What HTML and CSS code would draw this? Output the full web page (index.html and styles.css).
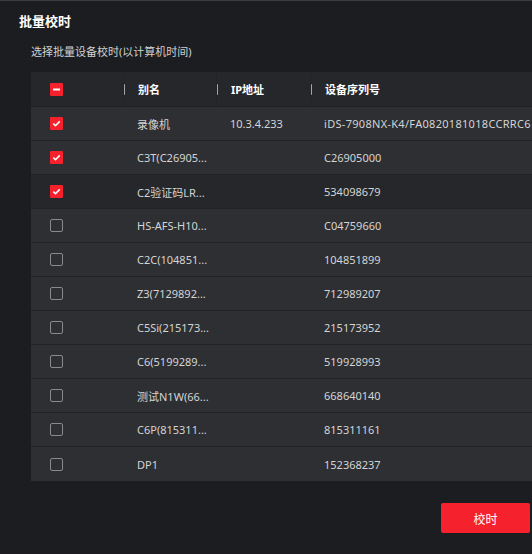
FILE: index.html
```html
<!DOCTYPE html>
<html lang="zh-CN">
<head>
<meta charset="utf-8">
<title>批量校时</title>
<link rel="stylesheet" href="styles.css">
</head>
<body>
<div class="page">
  <div class="title">批量校时</div>
  <div class="subtitle">选择批量设备校时(以计算机时间)</div>
  <div class="table">
    <div class="row head">
      <div class="cell chk"><span class="box on"><svg width="13" height="13" viewBox="0 0 13 13"><rect x="3" y="5.5" width="7" height="2" fill="#fff"/></svg></span></div>
      <div class="cell"><span class="sep"></span>别名</div>
      <div class="cell"><span class="sep"></span>IP地址</div>
      <div class="cell"><span class="sep"></span>设备序列号</div>
    </div>
    <div class="row">
      <div class="cell chk"><span class="box on"><svg width="13" height="13" viewBox="0 0 13 13"><path d="M3.3 6.7 L5.5 8.7 L9.7 4.4" fill="none" stroke="#fff" stroke-width="1.6"/></svg></span></div>
      <div class="cell">录像机</div>
      <div class="cell">10.3.4.233</div>
      <div class="cell serial">iDS-7908NX-K4/FA0820181018CCRRC6</div>
    </div>
    <div class="row">
      <div class="cell chk"><span class="box on"><svg width="13" height="13" viewBox="0 0 13 13"><path d="M3.3 6.7 L5.5 8.7 L9.7 4.4" fill="none" stroke="#fff" stroke-width="1.6"/></svg></span></div>
      <div class="cell">C3T(C26905...</div>
      <div class="cell"></div>
      <div class="cell">C26905000</div>
    </div>
    <div class="row hover">
      <div class="cell chk"><span class="box on"><svg width="13" height="13" viewBox="0 0 13 13"><path d="M3.3 6.7 L5.5 8.7 L9.7 4.4" fill="none" stroke="#fff" stroke-width="1.6"/></svg></span></div>
      <div class="cell">C2验证码LR...</div>
      <div class="cell"></div>
      <div class="cell">534098679</div>
    </div>
    <div class="row">
      <div class="cell chk"><span class="box"></span></div>
      <div class="cell">HS-AFS-H10...</div>
      <div class="cell"></div>
      <div class="cell">C04759660</div>
    </div>
    <div class="row">
      <div class="cell chk"><span class="box"></span></div>
      <div class="cell">C2C(104851...</div>
      <div class="cell"></div>
      <div class="cell">104851899</div>
    </div>
    <div class="row">
      <div class="cell chk"><span class="box"></span></div>
      <div class="cell">Z3(7129892...</div>
      <div class="cell"></div>
      <div class="cell">712989207</div>
    </div>
    <div class="row">
      <div class="cell chk"><span class="box"></span></div>
      <div class="cell">C5Si(215173...</div>
      <div class="cell"></div>
      <div class="cell">215173952</div>
    </div>
    <div class="row">
      <div class="cell chk"><span class="box"></span></div>
      <div class="cell">C6(5199289...</div>
      <div class="cell"></div>
      <div class="cell">519928993</div>
    </div>
    <div class="row">
      <div class="cell chk"><span class="box"></span></div>
      <div class="cell">测试N1W(66...</div>
      <div class="cell"></div>
      <div class="cell">668640140</div>
    </div>
    <div class="row">
      <div class="cell chk"><span class="box"></span></div>
      <div class="cell">C6P(815311...</div>
      <div class="cell"></div>
      <div class="cell">815311161</div>
    </div>
    <div class="row last">
      <div class="cell chk"><span class="box"></span></div>
      <div class="cell">DP1</div>
      <div class="cell"></div>
      <div class="cell">152368237</div>
    </div>
  </div>
  <div class="actions">
    <button class="btn">校时</button>
  </div>
</div>
</body>
</html>
```

FILE: styles.css
```css
html, body {
  margin: 0;
  padding: 0;
  background: #1b1d20;
}
body {
  width: 532px;
  height: 554px;
  overflow: hidden;
  font-family: "Noto Sans", "Noto Sans CJK SC", sans-serif;
  color: #d4d4d4;
}
.page {
  border-top: 1px solid #3a3c40;
  height: 553px;
  overflow: hidden;
}
.title {
  padding: 10px 0 0 19px;
  font-size: 13px;
  font-weight: bold;
  line-height: 20px;
  color: #ffffff;
}
.subtitle {
  margin-top: 12px;
  padding-left: 31px;
  font-size: 11px;
  line-height: 18px;
  color: #d0d0d0;
}
.table {
  margin: 11px 0 0 31px;
  width: 620px;
}
.row {
  display: grid;
  grid-template-columns: 92px 93px 94px 1fr;
  height: 33px;
  border-bottom: 1px solid #212326;
  background: #2d2f33;
  font-size: 11px;
  white-space: nowrap;
}
.row.hover {
  background: #25272a;
}
.row.last {
  border-bottom: none;
  height: 34px;
}
.row.head {
  height: 34px;
  background: #25272a;
  border-bottom: 1px solid #1f2124;
  color: #ffffff;
  font-weight: bold;
}
.cell {
  display: flex;
  align-items: center;
  padding-left: 14px;
  overflow: hidden;
}
.cell.serial {
  letter-spacing: 0.3px;
}
.head .cell + .cell {
  border-left: 1px solid #212326;
  padding-left: 0;
}
.sep {
  width: 2px;
  height: 11px;
  background: #a8a8a8;
  border-radius: 1px;
  margin-left: -1px;
  margin-right: 13px;
  flex: none;
}
.cell.chk {
  padding-left: 19px;
}
.box {
  width: 13px;
  height: 13px;
  box-sizing: border-box;
  border: 1px solid #8a8a8a;
  border-radius: 2px;
  display: block;
}
.box.on {
  border: none;
  background: #f5222d;
  border-radius: 1px;
}
.box svg {
  display: block;
}
.actions {
  display: flex;
  justify-content: flex-end;
  padding-right: 2px;
  margin-top: 22px;
}
.btn {
  width: 89px;
  height: 30px;
  border: none;
  border-radius: 2px;
  background: #f5222d;
  color: #ffffff;
  font-family: "Noto Sans CJK SC", sans-serif;
  font-size: 12px;
  padding: 0;
}
```
